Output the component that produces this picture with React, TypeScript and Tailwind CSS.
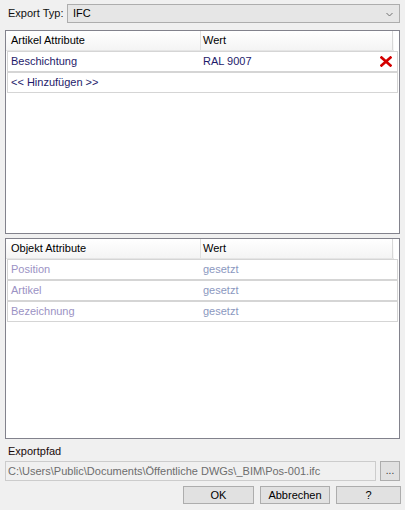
export default function App() {
  const font = { fontFamily: '"Liberation Sans", Arial, sans-serif' }

  return (
    <div className="w-[405px] h-[510px] bg-[#f0f0f0] text-[11px] text-black relative overflow-hidden" style={font}>
      {/* Export Typ */}
      <div className="flex items-center pt-[4px] h-[23px]">
        <div className="w-[67px] pl-[8px] text-[#101010]">Export Typ:</div>
        <div className="w-[333px] h-[19px] border border-[#adadad] bg-[#e6e6e6] flex items-center justify-between pl-[5px] pr-[6px]">
          <span>IFC</span>
          <svg width="7" height="5" viewBox="0 0 7 5" className="mt-[1px]">
            <path d="M0.5 1 L3.5 4 L6.5 1" fill="none" stroke="#707070" strokeWidth="1" />
          </svg>
        </div>
      </div>

      {/* Artikel Attribute */}
      <AttrPanel
        className="mt-[7px] h-[204px]"
        title="Artikel Attribute"
        rows={[
          { name: 'Beschichtung', value: 'RAL 9007', remove: true },
          { name: '<< Hinzufügen >>', value: '' },
        ]}
        nameColor="text-[#1e1a6a]"
        valueColor="text-[#1e1a6a]"
      />

      {/* Objekt Attribute */}
      <AttrPanel
        className="mt-[4px] h-[201px]"
        title="Objekt Attribute"
        rows={[
          { name: 'Position', value: 'gesetzt' },
          { name: 'Artikel', value: 'gesetzt' },
          { name: 'Bezeichnung', value: 'gesetzt' },
        ]}
        nameColor="text-[#9b92c4]"
        valueColor="text-[#8b98c0]"
      />

      {/* Exportpfad */}
      <div className="pl-[8px] mt-[5px] h-[14px] leading-[14px] text-[#1a0a0a]">Exportpfad</div>
      <div className="flex items-center mt-[3px] ml-[5px] gap-[4px]">
        <div className="w-[371px] h-[20px] border border-[#cccccc] bg-[#f0f0f0] text-[#6d6d6d] flex items-center pl-[2px]">
          C:\Users\Public\Documents\Öffentliche DWGs\_BIM\Pos-001.ifc
        </div>
        <button className="w-[20px] h-[20px] border border-[#adadad] bg-[#e1e1e1] text-[#333] text-[10px] leading-[10px] flex items-end justify-center pb-[4px]">
          ...
        </button>
      </div>

      {/* Buttons */}
      <div className="flex mt-[5px] pl-[183px] gap-[6px]">
        <DlgButton label="OK" w="w-[71px]" />
        <DlgButton label="Abbrechen" w="w-[70px]" />
        <DlgButton label="?" w="w-[65px]" />
      </div>
    </div>
  )
}

interface Row {
  name: string
  value: string
  remove?: boolean
}

function AttrPanel({
  className,
  title,
  rows,
  nameColor,
  valueColor,
}: {
  className: string
  title: string
  rows: Row[]
  nameColor: string
  valueColor: string
}) {
  return (
    <div className={`ml-[5px] w-[395px] border border-[#82828c] bg-white ${className}`}>
      {/* header */}
      <div className="flex h-[20px] bg-gradient-to-b from-white to-[#f4f4f4] border-b border-[#e5e5e5] w-[388px]">
        <div className="w-[195px] border-r border-[#e0e0e0] pl-[5px] flex items-center">{title}</div>
        <div className="w-[192px] border-r border-[#d8d8d8] pl-[2px] flex items-center">Wert</div>
      </div>
      {rows.map((r, i) => (
        <div
          key={i}
          className="ml-[1px] w-[391px] h-[21px] border border-[#d5d5d5] flex items-center"
        >
          <div className={`w-[194px] pl-[3px] ${nameColor}`}>{r.name}</div>
          <div className={`flex-1 pl-[1px] ${valueColor}`}>{r.value}</div>
          {r.remove && (
            <svg width="12" height="11" viewBox="0 0 12 11" className="mr-[5px]">
              <path d="M1.5 1.5 L10.5 9.5 M10.5 1.5 L1.5 9.5" stroke="#d40000" strokeWidth="2.6" strokeLinecap="square" />
            </svg>
          )}
        </div>
      ))}
    </div>
  )
}

function DlgButton({ label, w }: { label: string; w: string }) {
  return (
    <button className={`${w} h-[18px] border border-[#adadad] bg-[#e1e1e1] text-black flex items-center justify-center`}>
      {label}
    </button>
  )
}
